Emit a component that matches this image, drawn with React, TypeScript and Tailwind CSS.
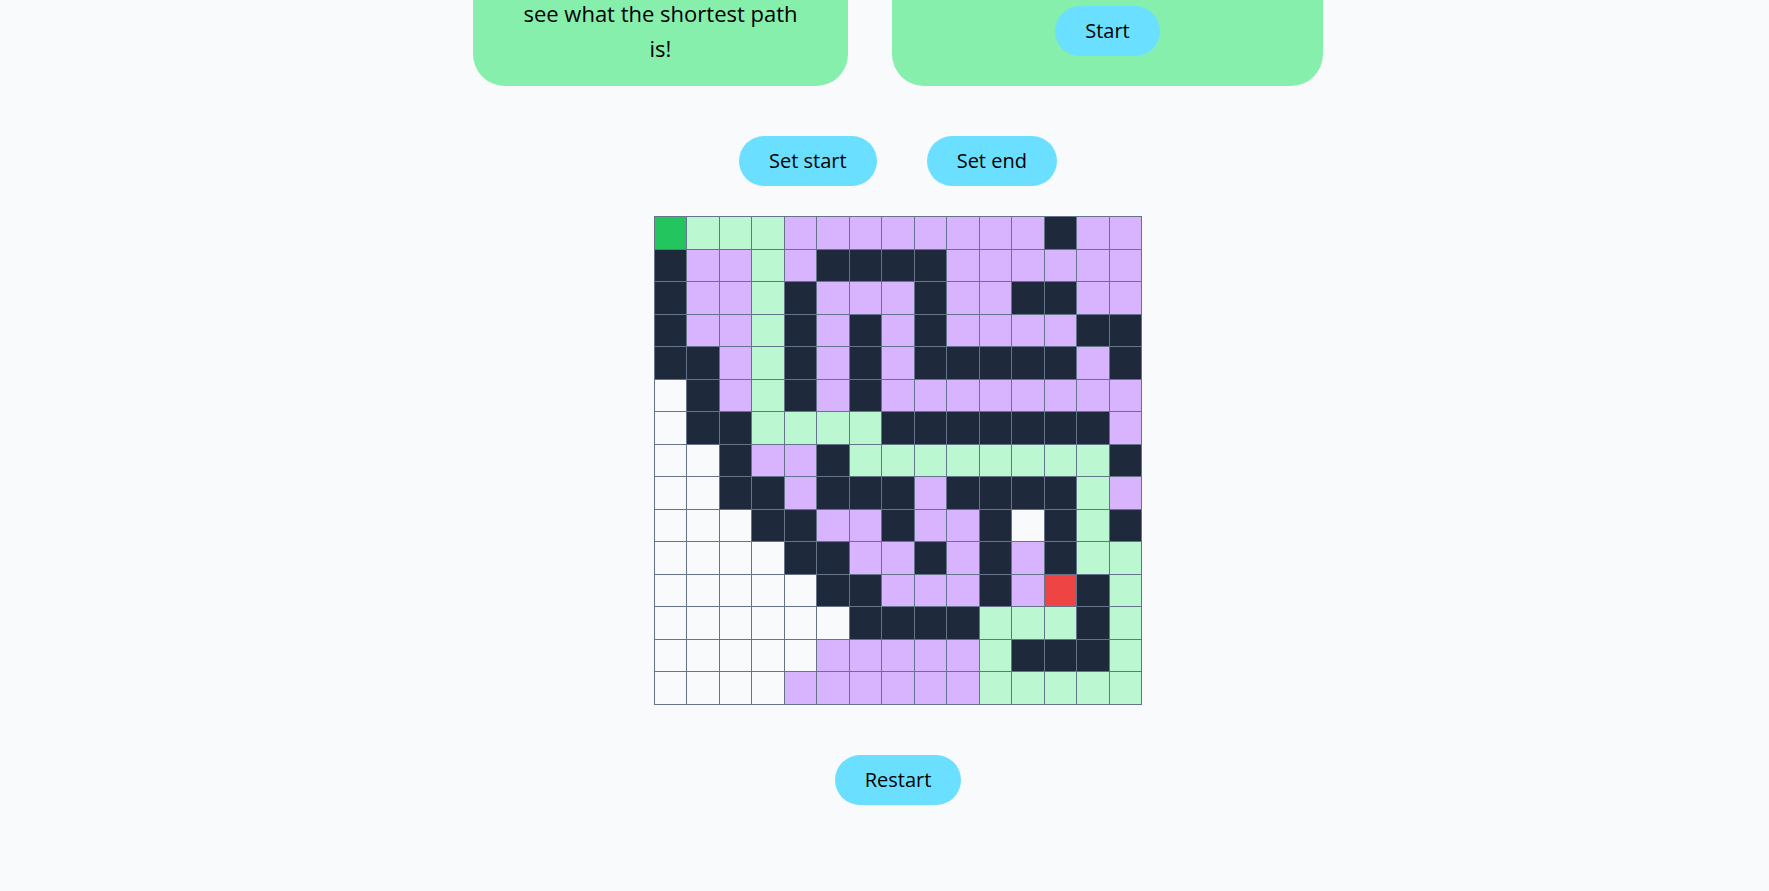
import React from 'react';

// cell codes: G start, R end, W empty, D wall, P visited, L path
const maze = [
  'GLLLPPPPPPPPDPP',
  'DPPLPDDDDPPPPPP',
  'DPPLDPPPDPPDDPP',
  'DPPLDPDPDPPPPDD',
  'DDPLDPDPDDDDDPD',
  'WDPLDPDPPPPPPPP',
  'WDDLLLLDDDDDDDP',
  'WWDPPDLLLLLLLLD',
  'WWDDPDDDPDDDDLP',
  'WWWDDPPDPPDWDLD',
  'WWWWDDPPDPDPDLL',
  'WWWWWDDPPPDPRDL',
  'WWWWWWDDDDLLLDL',
  'WWWWWPPPPPLDDDL',
  'WWWWPPPPPPLLLLL',
];

const cellColor: Record<string, string> = {
  G: 'bg-[#22c55e]',
  R: 'bg-[#ef4444]',
  W: 'bg-[#f8fafc]',
  D: 'bg-[#1e293b]',
  P: 'bg-[#d8b4fe]',
  L: 'bg-[#bbf7d0]',
};

const Pill: React.FC<{ label: string }> = ({ label }) => (
  <button className="h-[50px] px-[30px] rounded-full bg-[#6adfff] text-xl text-black">
    {label}
  </button>
);

const App: React.FC = () => {
  return (
    <div
      className="min-h-screen bg-[#f8fafc] pl-[27px] flex flex-col items-center"
      style={{ fontFamily: '"Open Sans", "Noto Sans", sans-serif' }}
    >
      {/* Intro cards (scrolled past the top) */}
      <div className="flex gap-[44px] h-[86px]">
        <div className="w-[375px] bg-[#86efac] rounded-b-[32px] pb-[20px] flex items-end justify-center">
          <p className="text-[22px] leading-[35px] text-black text-center px-10">
            see what the shortest path
            <br />
            is!
          </p>
        </div>
        <div className="w-[431px] bg-[#86efac] rounded-b-[32px] pb-[30px] flex items-end justify-center">
          <Pill label="Start" />
        </div>
      </div>

      {/* Controls */}
      <div className="mt-[50px] flex gap-[50px]">
        <Pill label="Set start" />
        <Pill label="Set end" />
      </div>

      {/* Board */}
      <div className="mt-[30px] grid grid-cols-[repeat(15,31.5px)] gap-px p-px bg-[#64748b]">
        {maze.flatMap((row, r) =>
          row.split('').map((c, i) => (
            <div key={`${r}-${i}`} className={`h-[31.5px] ${cellColor[c]}`} />
          ))
        )}
      </div>

      <div className="mt-[50px]">
        <Pill label="Restart" />
      </div>
    </div>
  );
};

export default App;
